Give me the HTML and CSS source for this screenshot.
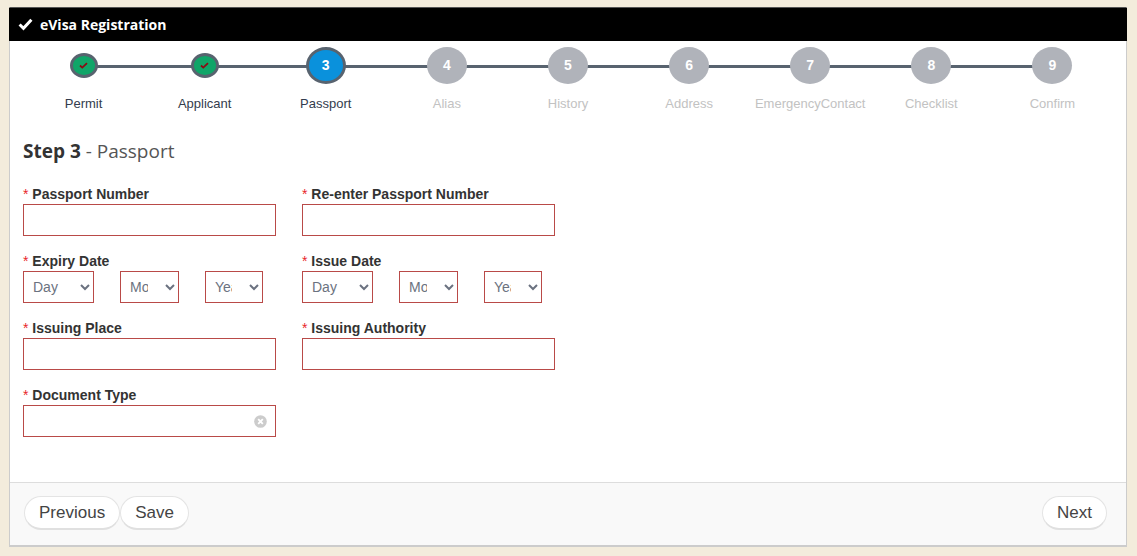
FILE: index.html
```html
<!DOCTYPE html>
<html lang="en">
<head>
  <meta charset="UTF-8" />
  <title>eVisa Registration</title>
  <link rel="stylesheet" href="styles.css">
</head>
<body>
  <div class="panel">
    <div class="panel-head">
      <svg class="head-check" viewBox="0 0 14 12"><path d="M1.5 6l3.6 3.5 7.4-8" fill="none" stroke="#fff" stroke-width="2.8"/></svg>
      <span>eVisa Registration</span>
    </div>

    <div class="panel-body">
      <ul class="steps">
        <li class="step done">
          <div class="dot"><svg viewBox="0 0 10 8"><path d="M1 4l2.6 2.4L9 1.2" fill="none" stroke="#8b0a14" stroke-width="2"/></svg></div>
          <div class="name">Permit</div>
        </li>
        <li class="step done">
          <div class="dot"><svg viewBox="0 0 10 8"><path d="M1 4l2.6 2.4L9 1.2" fill="none" stroke="#8b0a14" stroke-width="2"/></svg></div>
          <div class="name">Applicant</div>
        </li>
        <li class="step current">
          <div class="dot">3</div>
          <div class="name">Passport</div>
        </li>
        <li class="step"><div class="dot">4</div><div class="name">Alias</div></li>
        <li class="step"><div class="dot">5</div><div class="name">History</div></li>
        <li class="step"><div class="dot">6</div><div class="name">Address</div></li>
        <li class="step"><div class="dot">7</div><div class="name">EmergencyContact</div></li>
        <li class="step"><div class="dot">8</div><div class="name">Checklist</div></li>
        <li class="step"><div class="dot">9</div><div class="name">Confirm</div></li>
      </ul>

      <h2 class="step-title"><b>Step 3</b> - Passport</h2>

      <div class="form-grid">
        <div class="field">
          <label><i>*</i> Passport Number</label>
          <input type="text">
        </div>
        <div class="field">
          <label><i>*</i> Re-enter Passport Number</label>
          <input type="text">
        </div>

        <div class="field">
          <label><i>*</i> Expiry Date</label>
          <div class="date-row">
            <select class="sel-day"><option>Day</option></select>
            <select class="sel-month"><option>Month</option></select>
            <select class="sel-year"><option>Year</option></select>
          </div>
        </div>
        <div class="field">
          <label><i>*</i> Issue Date</label>
          <div class="date-row">
            <select class="sel-day"><option>Day</option></select>
            <select class="sel-month"><option>Month</option></select>
            <select class="sel-year"><option>Year</option></select>
          </div>
        </div>

        <div class="field">
          <label><i>*</i> Issuing Place</label>
          <input type="text">
        </div>
        <div class="field">
          <label><i>*</i> Issuing Authority</label>
          <input type="text">
        </div>

        <div class="field">
          <label><i>*</i> Document Type</label>
          <div class="combo">
            <input type="text">
            <svg class="clear" viewBox="0 0 14 14"><circle cx="7" cy="7" r="6.8" fill="#ccc"/><path d="M4.5 4.5l5 5M9.5 4.5l-5 5" stroke="#fff" stroke-width="2"/></svg>
          </div>
        </div>
      </div>
    </div>

    <div class="panel-foot">
      <div class="foot-left">
        <button>Previous</button>
        <button>Save</button>
      </div>
      <button>Next</button>
    </div>
  </div>
</body>
</html>
```

FILE: styles.css
```css
* {
  box-sizing: border-box;
}

body {
  margin: 0;
  height: 556px;
  overflow: hidden;
  background: #f3ecdc;
  font-family: "Liberation Sans", Arial, sans-serif;
  padding: 7px 10px 0 9px;
}

.panel {
  height: 540px;
  display: flex;
  flex-direction: column;
  background: #fff;
  border: 1px solid #ccc;
  border-top-color: #555;
  border-bottom: 2px solid #ccc;
}

.panel-head {
  height: 33px;
  margin: 0 -1px;
  background: #000;
  color: #fff;
  display: flex;
  align-items: center;
  padding-left: 9px;
  font-family: "Open Sans", sans-serif;
  font-size: 14px;
  font-weight: 700;
}

.head-check {
  width: 15px;
  height: 13px;
  margin-right: 7px;
}

.panel-body {
  flex: 1;
  padding: 0 13px;
}

.steps {
  list-style: none;
  margin: 0;
  padding: 6px 0 0;
  display: grid;
  grid-template-columns: repeat(9, 1fr);
}

.step {
  position: relative;
  text-align: center;
}

/* connector between this dot and the next one */
.step:not(:last-child)::after {
  content: "";
  position: absolute;
  top: 18px;
  left: 50%;
  width: 100%;
  height: 3px;
  background: #58636f;
}

.dot {
  position: relative;
  z-index: 1;
  width: 40px;
  height: 37px;
  margin: 0 auto;
  border-radius: 50%;
  background: #b0b3ba;
  color: #fff;
  font-size: 14px;
  font-weight: 700;
  line-height: 37px;
}

.step.done .dot {
  width: 28px;
  height: 25px;
  margin-top: 6px;
  margin-bottom: 6px;
  background: #10a568;
  border: 3px solid #58636f;
  display: flex;
  align-items: center;
  justify-content: center;
}

.step.done .dot svg {
  width: 9px;
  height: 7px;
}

.step.current .dot {
  background: #0a91dc;
  border: 3px solid #58636f;
  line-height: 31px;
}

.name {
  padding-top: 12px;
  font-size: 13px;
  line-height: 16px;
  color: #c2c2c2;
  white-space: nowrap;
}

.step.done .name,
.step.current .name {
  color: #333c4d;
}

.step-title {
  margin: 27px 0 0;
  font-family: "Open Sans", sans-serif;
  font-size: 19px;
  font-weight: 400;
  line-height: 24px;
  color: #555;
}

.step-title b {
  font-weight: 700;
  color: #333;
}

.form-grid {
  display: grid;
  grid-template-columns: 253px 253px;
  column-gap: 26px;
  row-gap: 16px;
  margin-top: 22px;
}

.field label {
  display: block;
  height: 19px;
  font-size: 14px;
  font-weight: 700;
  line-height: 19px;
  color: #333;
}

.field label i {
  color: #e8262a;
  font-style: normal;
  font-weight: 400;
}

.field input,
.field select {
  height: 32px;
  border: 1px solid #b94a48;
  border-radius: 0;
  background: #fff;
  font-family: inherit;
  font-size: 14px;
  color: #6b7280;
}

.field input {
  display: block;
  width: 100%;
}

.field select {
  padding: 0 14px 0 5px;
}

.date-row {
  display: flex;
}

.sel-day {
  width: 71px;
  margin-right: 26px;
}

.sel-month {
  width: 59px;
  margin-right: 26px;
}

.sel-year {
  width: 58px;
}

.combo {
  position: relative;
}

.clear {
  position: absolute;
  top: 10px;
  right: 9px;
  width: 13px;
  height: 13px;
}

.panel-foot {
  height: 63px;
  display: flex;
  align-items: center;
  justify-content: space-between;
  padding: 0 19px 2px 14px;
  background: #f9f9f9;
  border-top: 1px solid #ddd;
}

.foot-left {
  display: flex;
}

.panel-foot button {
  height: 34px;
  padding: 0 14px;
  border: 1px solid #e4e4e4;
  border-bottom: 2px solid #e0e0e0;
  border-radius: 17px;
  background: #fff;
  font-family: inherit;
  font-size: 17px;
  color: #444;
}
```
